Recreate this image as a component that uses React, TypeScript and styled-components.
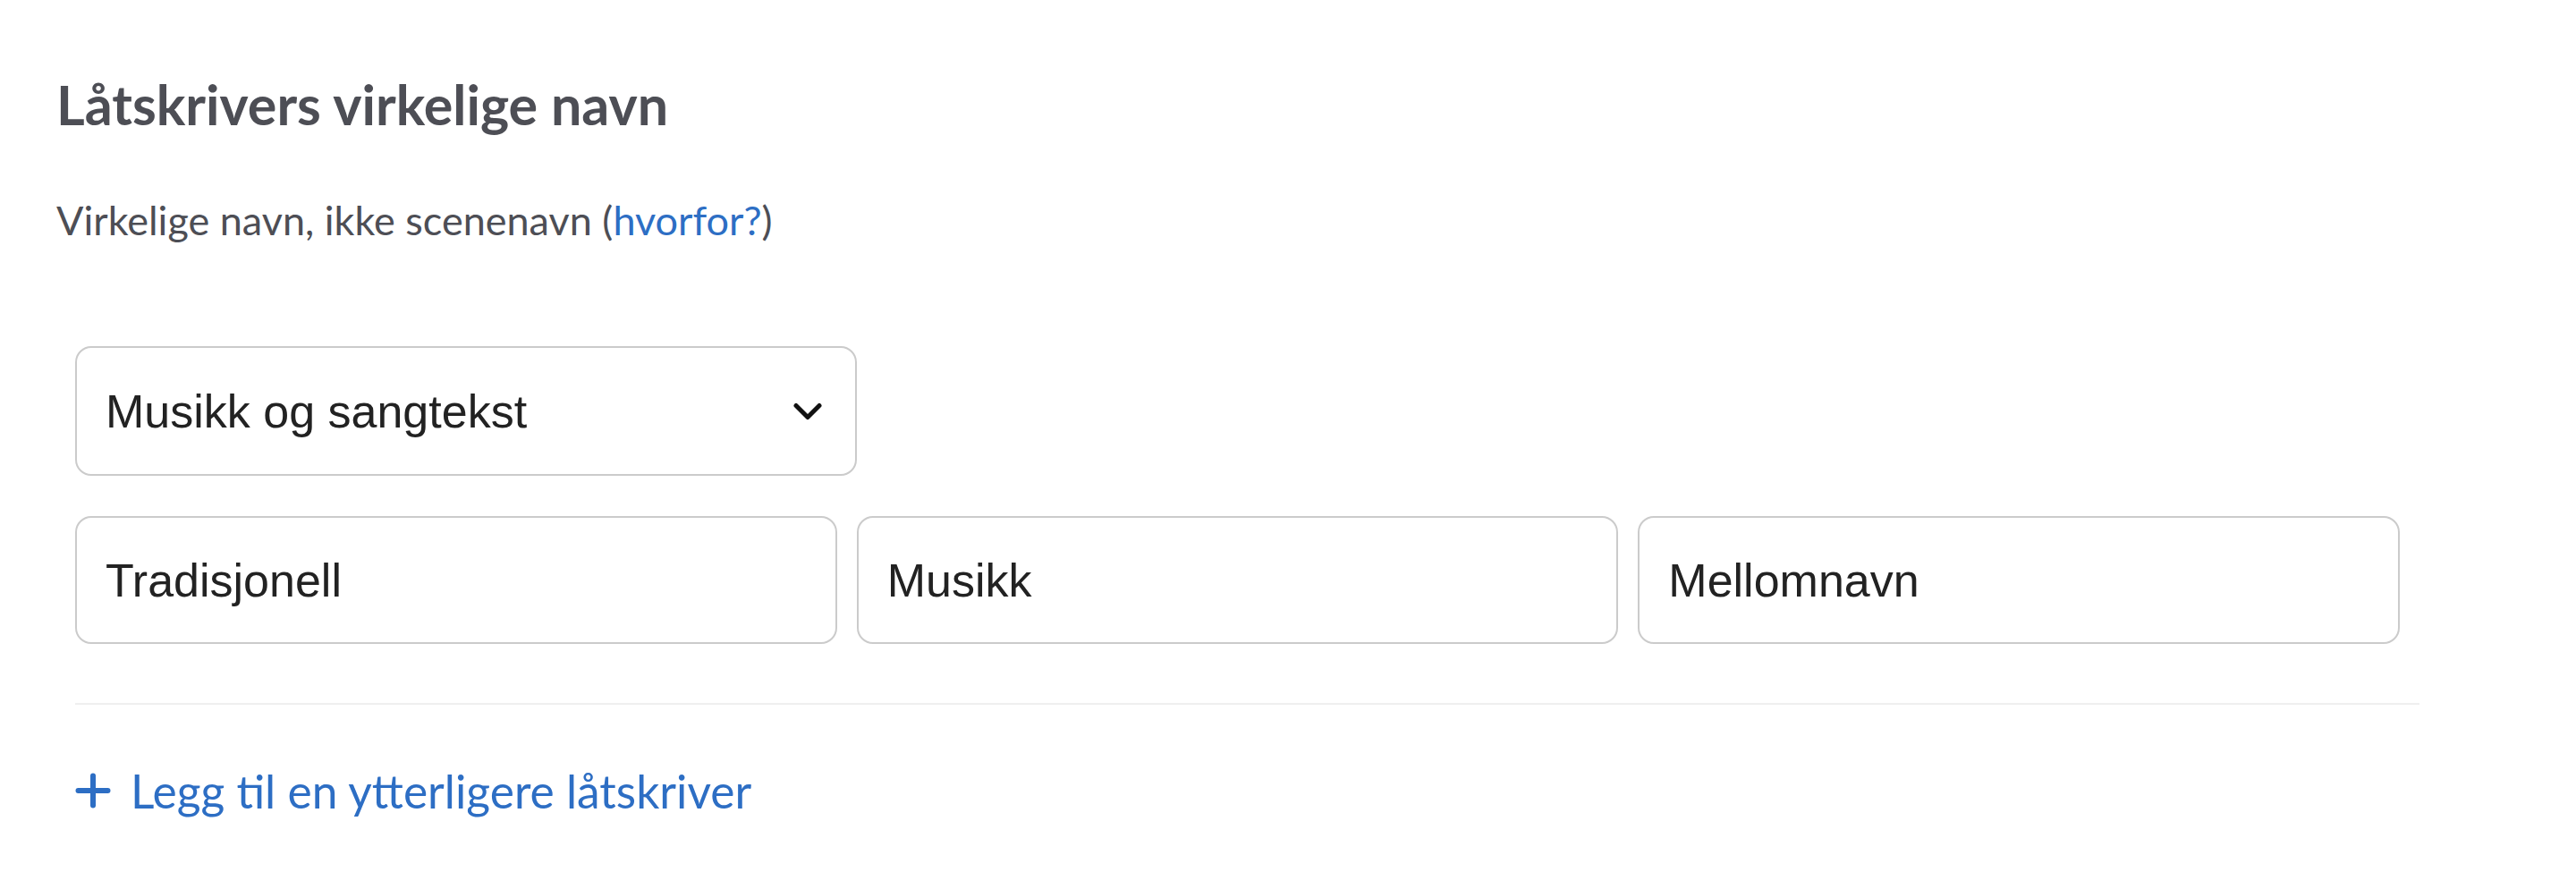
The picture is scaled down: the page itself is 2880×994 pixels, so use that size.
import React from 'react';
import styled, { createGlobalStyle } from 'styled-components';

const TEXT_GRAY = '#4d4e55';
const INPUT_TEXT = '#222222';
const BORDER = '#cbcbcb';
const LINK_BLUE = '#2d6ec4';
const DIVIDER = '#efefef';

const GlobalStyle = createGlobalStyle`
  html, body {
    margin: 0;
    padding: 0;
    background: #ffffff;
  }
  body {
    font-family: Lato, 'Open Sans', sans-serif;
  }
`;

// =============================================================================
// Styled Components
// =============================================================================

const Page = styled.main`
  padding: 81px 175px 60px 63px;
`;

const Title = styled.h2`
  margin: 0;
  font-family: Lato, sans-serif;
  font-weight: 700;
  font-size: 61px;
  line-height: 72px;
  color: ${TEXT_GRAY};
`;

const Lead = styled.p`
  margin: 60px 0 0;
  font-family: Lato, sans-serif;
  font-size: 45px;
  line-height: 66px;
  color: ${TEXT_GRAY};
  a {
    color: ${LINK_BLUE};
    text-decoration: none;
  }
`;

const Fields = styled.div`
  margin: 108px 0 0 21px;
`;

const Row = styled.div`
  display: grid;
  grid-template-columns: repeat(3, 1fr);
  margin-bottom: 45px;
`;

const Cell = styled.div<{ $gutter?: boolean }>`
  padding-right: ${(p) => (p.$gutter ? '22px' : '0')};
`;

const SelectBox = styled.button`
  box-sizing: border-box;
  display: flex;
  align-items: center;
  justify-content: space-between;
  width: 100%;
  height: 145px;
  padding: 0 37px 0 32px;
  border: 2px solid ${BORDER};
  border-radius: 18px;
  background: #ffffff;
  font-family: 'Liberation Sans', Arial, sans-serif;
  font-size: 52px;
  color: ${INPUT_TEXT};
  cursor: pointer;
`;

const TextInput = styled.input`
  box-sizing: border-box;
  display: block;
  width: 100%;
  height: 143px;
  padding: 0 32px;
  border: 2px solid ${BORDER};
  border-radius: 18px;
  background: #ffffff;
  font-family: 'Liberation Sans', Arial, sans-serif;
  font-size: 52px;
  color: ${INPUT_TEXT};
  outline: none;
`;

const Divider = styled.hr`
  margin: 66px 0 0;
  border: 0;
  height: 2px;
  background: ${DIVIDER};
`;

const AddButton = styled.button`
  display: flex;
  align-items: center;
  gap: 22px;
  margin-top: 65px;
  padding: 0;
  border: 0;
  background: none;
  font-family: Lato, sans-serif;
  font-size: 51.5px;
  line-height: 62px;
  color: ${LINK_BLUE};
  cursor: pointer;
`;

// =============================================================================
// Icons
// =============================================================================

const Chevron = () => (
  <svg width="32" height="20" viewBox="0 0 32 20" fill="none">
    <path d="M3 3.5 L16 16.5 L29 3.5" stroke="#111" strokeWidth="5" strokeLinecap="round" strokeLinejoin="round" />
  </svg>
);

const Plus = () => (
  <svg width="40" height="40" viewBox="0 0 40 40" fill="none">
    <path d="M20 3.5 V36.5 M3.5 20 H36.5" stroke={LINK_BLUE} strokeWidth="6" strokeLinecap="round" />
  </svg>
);

// =============================================================================
// Main Component
// =============================================================================

const names = ['Tradisjonell', 'Musikk', 'Mellomnavn'];

export default function App() {
  return (
    <>
      <GlobalStyle />
      <Page>
        <Title>Låtskrivers virkelige navn</Title>
        <Lead>
          Virkelige navn, ikke scenenavn (<a href="#">hvorfor?</a>)
        </Lead>
        <Fields>
          <Row>
            <Cell>
              <SelectBox type="button">
                <span>Musikk og sangtekst</span>
                <Chevron />
              </SelectBox>
            </Cell>
          </Row>
          <Row>
            {names.map((name) => (
              <Cell key={name} $gutter>
                <TextInput defaultValue={name} />
              </Cell>
            ))}
          </Row>
          <Divider />
          <AddButton type="button">
            <Plus />
            Legg til en ytterligere låtskriver
          </AddButton>
        </Fields>
      </Page>
    </>
  );
}
